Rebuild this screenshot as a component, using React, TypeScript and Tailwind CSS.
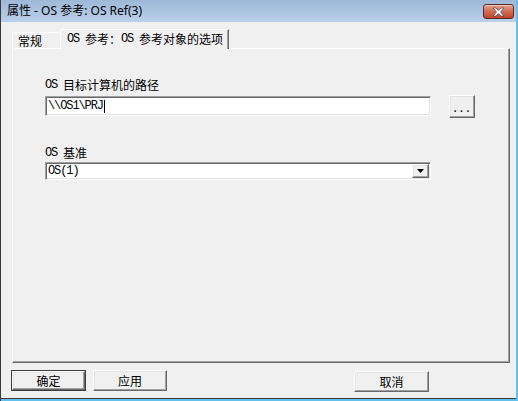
import React from 'react'

const cjk = "font-['Noto_Sans_CJK_SC','Noto_Sans',sans-serif]"
const mono = "font-['Liberation_Mono','Noto_Sans_CJK_SC',monospace]"

const raised =
  'border border-t-white border-l-white border-r-[#696969] border-b-[#696969] shadow-[inset_-1px_-1px_0_#a0a0a0,inset_1px_1px_0_#e3e3e3] bg-[#f0f0f0]'
const sunken =
  'border border-t-[#a0a0a0] border-l-[#a0a0a0] border-r-white border-b-white shadow-[inset_1px_1px_0_#696969,inset_-1px_-1px_0_#e3e3e3] bg-white'

function Os() {
  return <span className={`${mono} mr-[6px] text-[12px] tracking-[-1.2px]`}>OS</span>
}

function CloseButton() {
  return (
    <div className="mt-[4px] mr-[2px] flex h-[15px] w-[31px] items-center justify-center rounded-[3px] border border-[#5b2b28] bg-gradient-to-b from-[#e6a394] via-[#d06a52] to-[#c0432a] shadow-[inset_0_1px_0_#f2c2b6]">
      <svg width="15" height="10" viewBox="0 0 15 10">
        <path
          d="M2 1 L5 1 L7.5 3.5 L10 1 L13 1 L9.5 5 L13 9 L10 9 L7.5 6.5 L5 9 L2 9 L5.5 5 Z"
          fill="#ffffff"
          stroke="#5a4a48"
          strokeWidth="0.8"
          strokeLinejoin="round"
        />
      </svg>
    </div>
  )
}

function DialogButton({ label, isDefault, className }: { label: string; isDefault?: boolean; className?: string }) {
  const inner = (
    <div className={`${raised} flex h-full w-full items-center justify-center text-[12px] text-black`}>{label}</div>
  )
  if (isDefault) {
    return <div className={`h-[21px] border border-[#3c3c3c] ${className ?? ''}`}>{inner}</div>
  }
  return <div className={`h-[21px] ${className ?? ''}`}>{inner}</div>
}

export default function App() {
  return (
    <div className={`${cjk} flex h-[401px] w-[518px] flex-col border-l border-l-[#3a3a3a] border-r-2 border-r-[#62c0ec] bg-[#f0f0f0] text-black`}>
      {/* title bar */}
      <div className="flex h-[22px] shrink-0 items-start justify-between bg-gradient-to-b from-[#9db8d8] to-[#bad1ea]">
        <div className="pl-[6px] pt-[3px] text-[12px] leading-[16px] font-['Noto_Sans','Noto_Sans_CJK_SC',sans-serif]">
          属性 - OS 参考: OS Ref(3)
        </div>
        <CloseButton />
      </div>

      {/* tabs */}
      <div className="mt-[7px] ml-[11px] flex h-[19px] items-end">
        <div className="flex h-[16px] w-[48px] items-center border-t border-l border-t-white border-l-white pl-[5px] text-[12px] leading-[14px]">
          常规
        </div>
        <div className="relative z-10 -mb-px flex h-[20px] w-[169px] items-start border-t border-l border-r border-t-white border-l-white border-r-[#696969] bg-[#f0f0f0] pt-[2px] pl-[6px] text-[12px] leading-[14px] shadow-[inset_-1px_0_0_#a0a0a0]">
          <Os />
          <span>参考：</span>
          <Os />
          <span>参考对象的选项</span>
        </div>
      </div>

      {/* panel */}
      <div className="ml-[11px] mr-[6px] flex h-[315px] flex-col border border-t-white border-l-white border-r-[#696969] border-b-[#696969] pl-[32px] shadow-[inset_-1px_-1px_0_#a0a0a0]">
        <div className="mt-[29px] flex h-[14px] items-center text-[12px] leading-[14px]">
          <Os />
          <span>目标计算机的路径</span>
        </div>
        <div className="mt-[3px] flex items-start">
          <div className={`${sunken} mt-px flex h-[20px] w-[386px] items-center pl-[2px]`}>
            <span className={`${mono} text-[12px] leading-[14px] tracking-[-1.1px]`}>\\OS1\PRJ</span>
            <span className="ml-px h-[13px] w-px bg-black" />
          </div>
          <div className={`${raised} ml-[18px] flex h-[23px] w-[26px] items-center justify-center pl-[2px] text-[12px] leading-[14px] tracking-[3px]`}>
            ...
          </div>
        </div>
        <div className="mt-[28px] flex h-[14px] items-center text-[12px] leading-[14px]">
          <Os />
          <span>基准</span>
        </div>
        <div className={`${sunken} mt-[2px] flex h-[18px] w-[386px] items-center justify-between pl-[2px] pr-px`}>
          <span className={`${mono} text-[12px] leading-[14px] tracking-[-1.1px]`}>OS(1)</span>
          <div className={`${raised} flex h-[14px] w-[17px] items-center justify-center`}>
            <svg width="7" height="4" viewBox="0 0 7 4">
              <path d="M0 0 L7 0 L3.5 4 Z" fill="#000" />
            </svg>
          </div>
        </div>
      </div>

      {/* bottom buttons */}
      <div className="mt-[7px] flex items-start pl-[10px]">
        <DialogButton label="确定" isDefault className="w-[75px]" />
        <DialogButton label="应用" className="ml-[7px] w-[74px]" />
        <DialogButton label="取消" className="mt-px ml-[187px] w-[75px]" />
      </div>

      <div className="mt-auto h-px bg-[#3a3a3a]" />
      <div className="h-[2px] bg-[#62c0ec]" />
    </div>
  )
}
